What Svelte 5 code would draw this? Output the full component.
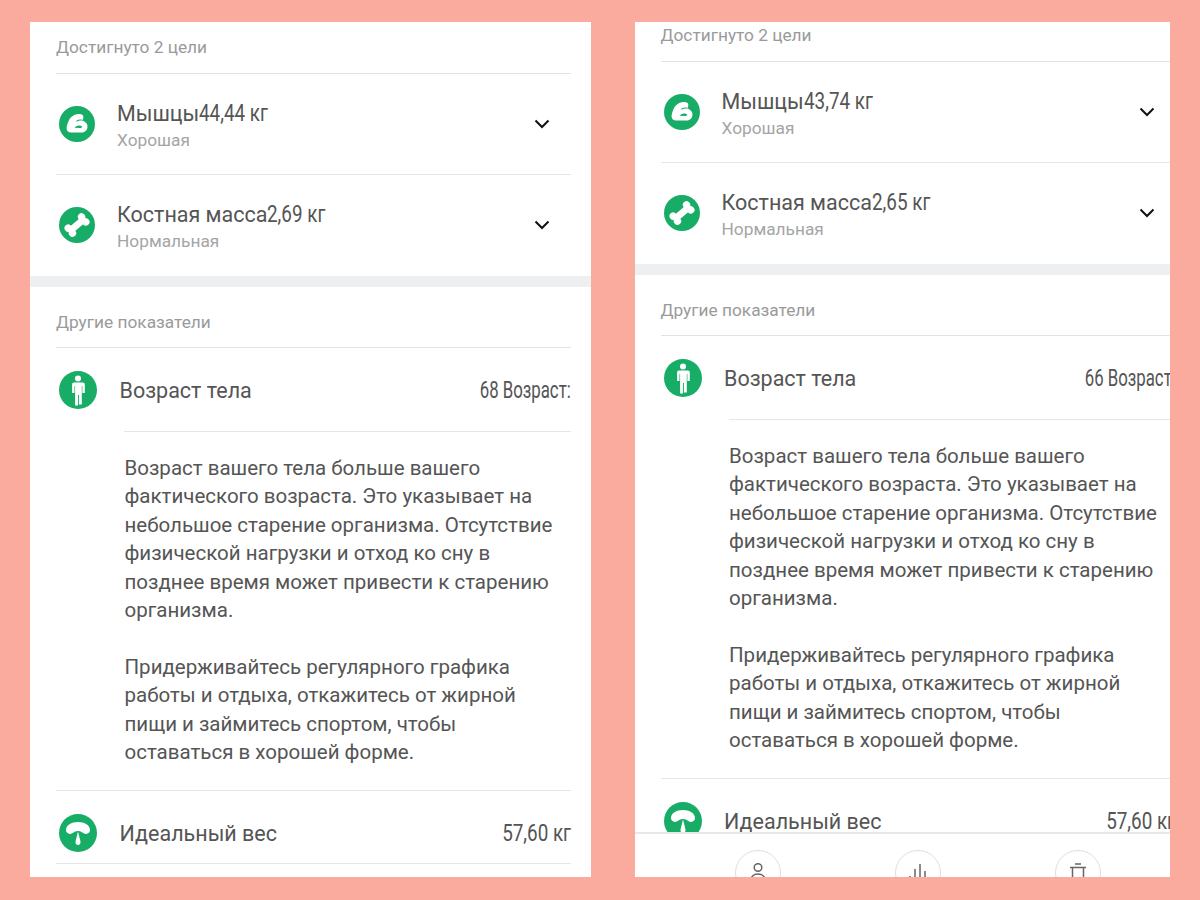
<script>
  const panels = [
    { muscle: '44,44 кг', bone: '2,69 кг', age: '68 Возраст:', scrolled: false },
    { muscle: '43,74 кг', bone: '2,65 кг', age: '66 Возраст:', scrolled: true }
  ];
</script>

{#snippet chevron()}
  <svg class="chevron" viewBox="0 0 16 10" width="16" height="10">
    <path d="M1.5 1.5 8 8l6.5-6.5" fill="none" stroke="#111" stroke-width="2" />
  </svg>
{/snippet}

{#snippet goal(icon, name, value, note)}
  <div class="goal">
    <svg class="icon small" viewBox="0 0 38 38">
      <circle cx="19" cy="19" r="19" fill="#17ad67" />
      {@render icon()}
    </svg>
    <div class="goal-text">
      <div class="name">{name}<span class="num">{value}</span></div>
      <div class="note">{note}</div>
    </div>
    {@render chevron()}
  </div>
{/snippet}

{#snippet armIcon()}
  <path d="M20 8.500C15 9.200 11.500 12 10 16c-1 2.500-2 5-2 7.500C8 26.500 10 28 13 28h10.500c4.500 0 7-3.500 6.500-7.200-.6-4-5-6.300-9-5.300l-3 1c.6-1.800 3.500-2.700 7.300-1.800l.4-3.200c.2-2-2-3.400-5.700-3z" fill="#fff" />
  <path d="M16.500 23c1-2.600 6-3.500 8-1.300-.2 1-1 1.600-2.200 1.600z" fill="#17ad67" />
{/snippet}

{#snippet boneIcon()}
  <g transform="rotate(-40 19 19)" fill="#fff">
    <rect x="11" y="15.500" width="16" height="7" />
    <circle cx="9.800" cy="15.500" r="3.900" />
    <circle cx="9.800" cy="22.500" r="3.900" />
    <circle cx="28.200" cy="15.500" r="3.900" />
    <circle cx="28.200" cy="22.500" r="3.900" />
  </g>
{/snippet}

{#snippet personIcon()}
  <circle cx="19" cy="7.500" r="3" fill="#fff" />
  <path d="M14.200 11.500h9.600c1.300 0 2 .7 2 2v8.500h-2.400v-7h-.6v18.500h-2.900V24h-.9v10.500h-2.900V15h-.6v7h-2.400v-8.500c0-1.300.7-2 2-2z" fill="#fff" />
{/snippet}

{#snippet scaleIcon()}
  <path d="M19 8c6.500 0 12 3.200 12 8 0 3-2.700 4.400-5.200 3.700-2.100-.6-3.900-2.700-6.800-2.700s-4.700 2.100-6.800 2.700C9.700 20.400 7 19 7 16c0-4.800 5.500-8 12-8z" fill="#fff" />
  <path d="M19 17.500l2.400 9.500c.6 2.400-.8 4-2.400 4s-3-1.600-2.400-4z" fill="#fff" />
{/snippet}

{#snippet metric(icon, name, value, short = false, tight = false)}
  <div class="metric" class:short>
    <svg class="icon" viewBox="0 0 38 38">
      <circle cx="19" cy="19" r="19" fill="#17ad67" />
      {@render icon()}
    </svg>
    <span class="name">{name}</span>
    <span class="num right" class:tight>{value}</span>
  </div>
{/snippet}

<div class="page">
  {#each panels as panel}
    <section class="panel" class:narrow={panel.scrolled}>
      <div class="content" class:scrolled={panel.scrolled}>
        <div class="block">
          <h3>Достигнуто 2 цели</h3>
          {@render goal(armIcon, 'Мышцы', panel.muscle, 'Хорошая')}
          <div class="rule"></div>
          {@render goal(boneIcon, 'Костная масса', panel.bone, 'Нормальная')}
        </div>
        <div class="band"></div>
        <div class="block">
          <h3 class="second">Другие показатели</h3>
          {@render metric(personIcon, 'Возраст тела', panel.age, false, true)}
          <div class="rule inset"></div>
          <div class="desc">
            <p>Возраст вашего тела больше вашего<br />фактического возраста. Это указывает на<br />небольшое старение организма. Отсутствие<br />физической нагрузки и отход ко сну в<br />позднее время может привести к старению<br />организма.</p>
            <p>Придерживайтесь регулярного графика<br />работы и отдыха, откажитесь от жирной<br />пищи и займитесь спортом, чтобы<br />оставаться в хорошей форме.</p>
          </div>
          <div class="rule"></div>
          {@render metric(scaleIcon, 'Идеальный вес', '57,60 кг', true)}
          <div class="rule"></div>
        </div>
      </div>
      {#if panel.scrolled}
        <nav class="tabs">
          <div class="tab">
            <svg viewBox="0 0 20 20" width="20" height="20" fill="none" stroke="#666" stroke-width="1.500">
              <circle cx="10" cy="4.500" r="3.800" />
              <path d="M2.500 19c0-5 3-8 7.500-8s7.500 3 7.500 8" />
            </svg>
          </div>
          <div class="tab">
            <svg viewBox="0 0 20 20" width="20" height="20" fill="none" stroke="#666" stroke-width="1.500">
              <path d="M2 20v-7M7 20V6M12 20V1M17 20V8" />
            </svg>
          </div>
          <div class="tab">
            <svg viewBox="0 0 20 20" width="20" height="20" fill="none" stroke="#666" stroke-width="1.500">
              <path d="M7 1h6M2 4.500h16M4.500 4.500V20M15.500 4.500V20" />
            </svg>
          </div>
        </nav>
      {/if}
    </section>
  {/each}
</div>

<style>
  :global(body) {
    background: #fbaa9e;
  }

  .page {
    display: flex;
    gap: 44px;
    height: 900px;
    box-sizing: border-box;
    padding: 22px 0 0 30px;
    overflow: hidden;
    font-family: Roboto, "Noto Sans", sans-serif;
  }

  .panel {
    position: relative;
    flex: none;
    width: 561px;
    height: 855px;
    background: #fff;
    overflow: hidden;
  }

  .panel.narrow {
    width: 535px;
  }

  .content {
    width: 561px;
  }

  .content.scrolled {
    margin: -12px 0 0 -0.5px;
  }

  .block {
    padding: 0 20px 0 26px;
  }

  h3 {
    margin: 0;
    height: 52px;
    box-sizing: border-box;
    padding-top: 15px;
    font-size: 17.300px;
    line-height: 20px;
    font-weight: 400;
    color: #9a9a9a;
    border-bottom: 1px solid #e2e2e2;
  }

  h3.second {
    height: 61px;
    padding-top: 25px;
  }

  .goal {
    display: flex;
    align-items: center;
    height: 100px;
    padding-left: 3px;
  }

  .goal-text {
    flex: 1;
    margin-left: 22px;
    margin-top: 3px;
  }

  .icon {
    flex: none;
    width: 38px;
    height: 38px;
  }

  .icon.small {
    width: 36px;
    height: 36px;
  }

  .name {
    font-size: 21.500px;
    line-height: 28px;
    color: #555;
  }

  .note {
    font-size: 17.300px;
    line-height: 24px;
    color: #a5a5a5;
  }

  .num {
    display: inline-block;
    font-size: 23px;
    line-height: 28px;
    color: #555;
    transform: scaleX(0.82);
    transform-origin: left center;
  }

  .num.right {
    transform-origin: right center;
    margin-left: auto;
    margin-top: 2px;
    white-space: nowrap;
  }

  .num.tight {
    transform: scaleX(0.73);
  }

  .chevron {
    margin-right: 21px;
  }

  .rule {
    height: 1px;
    background: #e6e6e6;
  }

  .rule.inset {
    margin-left: 68px;
  }

  .band {
    height: 11px;
    margin-top: 1px;
    background: #eeeff0;
  }

  .metric {
    display: flex;
    align-items: center;
    height: 83px;
    padding-left: 3px;
  }

  .metric.short {
    height: 60px;
    padding-top: 12px;
  }

  .metric .name {
    margin-left: 22.500px;
    margin-top: 2px;
  }

  .desc {
    padding: 22px 0 24px 68.500px;
    font-size: 20.500px;
    line-height: 28.400px;
    color: #555;
    white-space: nowrap;
  }

  .desc p {
    margin: 0 0 28.400px;
  }

  .desc p:last-child {
    margin-bottom: 0;
  }

  .tabs {
    position: absolute;
    left: 0;
    right: 0;
    bottom: 0;
    height: 45px;
    box-sizing: border-box;
    display: grid;
    grid-template-columns: repeat(3, 160px);
    padding: 16px 0 0 43px;
    background: #fff;
    border-top: 2px solid #e8e8e8;
  }

  .tab {
    justify-self: center;
    display: flex;
    justify-content: center;
    width: 46px;
    height: 46px;
    box-sizing: border-box;
    padding-top: 12px;
    border: 1.500px solid #dedede;
    border-radius: 50%;
  }
</style>
